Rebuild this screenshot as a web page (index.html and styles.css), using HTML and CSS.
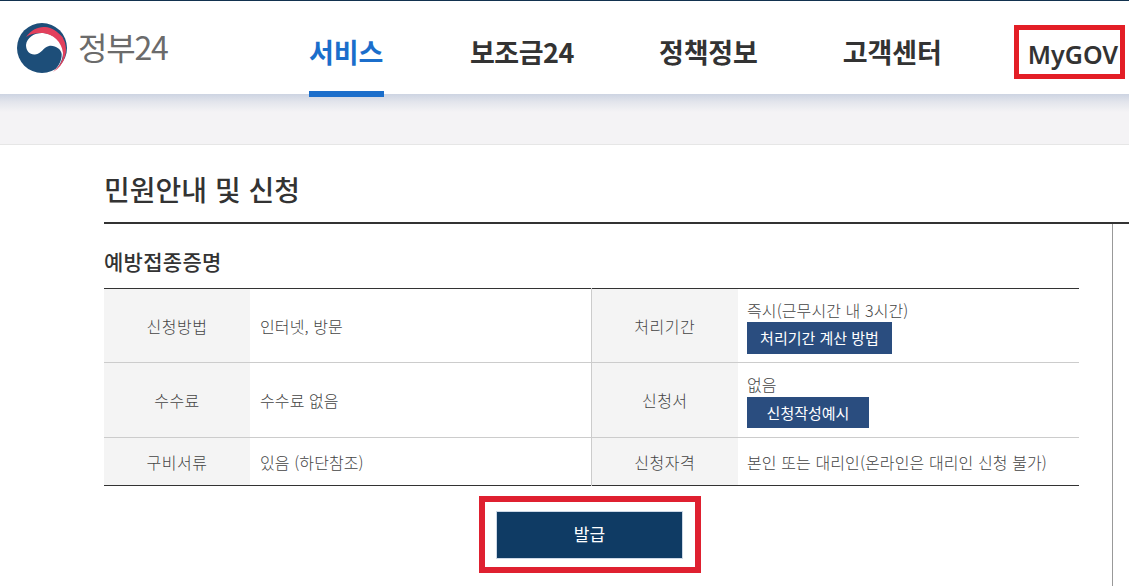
FILE: index.html
```html
<!DOCTYPE html>
<html lang="ko">
<head>
<meta charset="utf-8">
<title>민원안내 및 신청</title>
<link rel="stylesheet" href="styles.css">
</head>
<body>
<header class="site-header">
  <a class="logo" href="#">
    <svg class="logo-mark" width="52" height="52" viewBox="0 0 52 52" aria-hidden="true">
      <circle cx="25" cy="25" r="25" fill="#1d4e79"/>
      <path d="M9 22C10 14 18 9.500 26 10C38 11 47 20 46 30C45.500 38 42 44 36 49C41 44 45 38 44.700 31C44 26 38 22 32 23C26 24 25 31 18 31.500C13 32 9 28 9 22Z" fill="#fff"/>
      <path d="M9 14C14 7 21 3.500 28 4C35 4.500 41 9 45.500 14A25.500 25.500 0 0 1 36 49C43 43 46.500 37 46 30C45 19 36 11 26 10C19 9.700 13 11 9 14Z" fill="#e2405c"/>
    </svg>
    <span class="logo-text">정부24</span>
  </a>
  <nav class="main-nav">
    <a class="nav-item is-active" href="#">서비스</a>
    <a class="nav-item nav-subsidy" href="#">보조금24</a>
    <a class="nav-item" href="#">정책정보</a>
    <a class="nav-item" href="#">고객센터</a>
    <a class="nav-item nav-mygov" href="#">MyGOV</a>
  </nav>
</header>
<div class="sub-band"></div>
<main class="page">
  <h1 class="page-title">민원안내 및 신청</h1>
  <div class="content">
    <h2 class="service-title">예방접종증명</h2>
    <table class="info-table">
      <colgroup>
        <col class="col-head"><col class="col-body"><col class="col-head-wide"><col>
      </colgroup>
      <tbody>
        <tr class="row-a">
          <th>신청방법</th>
          <td>인터넷, 방문</td>
          <th class="th-split">처리기간</th>
          <td class="td-right td-stack">
            <div class="cell-line">즉시(근무시간 내 3시간)</div>
            <a class="mini-btn btn-calc" href="#">처리기간 계산 방법</a>
          </td>
        </tr>
        <tr class="row-b">
          <th>수수료</th>
          <td>수수료 없음</td>
          <th class="th-split">신청서</th>
          <td class="td-right td-stack">
            <div class="cell-line">없음</div>
            <a class="mini-btn btn-form" href="#">신청작성예시</a>
          </td>
        </tr>
        <tr class="row-c">
          <th>구비서류</th>
          <td>있음 (하단참조)</td>
          <th class="th-split">신청자격</th>
          <td class="td-right">본인 또는 대리인(온라인은 대리인 신청 불가)</td>
        </tr>
      </tbody>
    </table>
    <div class="action">
      <div class="action-mark">
        <a class="issue-btn" href="#">발급</a>
      </div>
    </div>
  </div>
</main>
</body>
</html>
```

FILE: styles.css
```css
* { box-sizing: border-box; }
html, body { margin: 0; padding: 0; height: 586px; overflow: hidden; background: #fff; }
body { font-family: "Noto Sans CJK KR", "Noto Sans", sans-serif; color: #333; }
a { text-decoration: none; color: inherit; }

.site-header {
  position: relative;
  height: 94px;
  border-top: 1px solid #12324f;
  display: flex;
  background: #fff;
}
.logo { width: 309px; padding: 22px 0 0 17px; display: flex; align-items: flex-start; flex: none; }
.logo-mark { flex: none; }
.logo-text {
  font-size: 32px; line-height: 46px; color: #6b6b6b; margin-left: 9px;
  letter-spacing: -1.2px; font-weight: 400;
}
.main-nav { display: flex; align-items: flex-start; gap: 85px; }
.nav-item {
  font-size: 27px; font-weight: 700; line-height: 36px; height: 93px; padding-top: 33px;
  color: #333; letter-spacing: -0.1px; white-space: nowrap;
}
.nav-item.is-active {
  color: #1b6ecb; border-bottom: 6px solid #1b6ecb; height: 96px; width: 75px; margin-right: 1px;
}
.nav-subsidy { letter-spacing: -0.5px; }
.nav-mygov {
  width: 111px; height: 54px; padding: 6px 0 0 9px; margin-top: 24px; margin-left: -13px;
  border: 5px solid #e31e26; font-size: 25px; line-height: 36px; letter-spacing: 0;
  font-family: "Noto Sans", sans-serif; font-weight: 600;
}

.sub-band {
  height: 51px;
  background: linear-gradient(#cdd4e2 0, #e3e5ec 8px, #f4f3f5 18px);
  border-bottom: 1px solid #e6e6e6;
}

.page-title {
  margin: 0 0 0 104px;
  height: 79px;
  padding-top: 24px;
  font-size: 28px; line-height: 40px; font-weight: 500;
  color: #333;
  border-bottom: 2px solid #333;
}
.content {
  width: 1113px; height: 362px;
  padding: 0 33px 0 104px;
  border-right: 1px solid #999;
}

.service-title {
  margin: 0; padding-top: 22px; height: 64px;
  font-size: 21px; line-height: 30px; font-weight: 500; letter-spacing: 0.3px;
  color: #333;
}

.info-table {
  width: 975px; border-collapse: collapse; table-layout: fixed;
  border-top: 1px solid #333; border-bottom: 1px solid #333;
  font-size: 16px; letter-spacing: 0.1px; color: #444; font-weight: 300;
}
.col-head { width: 146px; }
.col-body { width: 341px; }
.col-head-wide { width: 147px; }
.info-table th, .info-table td { padding: 0; line-height: 20px; }
.info-table th { background: #f4f4f4; font-weight: 300; text-align: center; letter-spacing: 0.5px; }
.info-table td { padding-left: 10px; }
.info-table .th-split { border-left: 1px solid #ccc; }
.info-table .td-right { padding-left: 9px; }
.info-table .td-stack { padding-top: 2px; }
.row-a { height: 74px; border-bottom: 1px solid #ccc; }
.row-b { height: 75px; border-bottom: 1px solid #ccc; }
.row-c { height: 48px; }
.cell-line { line-height: 20px; }
.mini-btn {
  display: block; margin-top: 2px; height: 32px; line-height: 31px; text-align: center;
  background: #2a4d7f; color: #fff; font-size: 15px; letter-spacing: 0; font-weight: 400;
}
.btn-calc { width: 145px; }
.btn-form { width: 122px; height: 31px; margin-top: 3px; }

.action { display: flex; justify-content: center; padding: 10px 3px 0 0; width: 975px; }
.action-mark {
  width: 222px; height: 77px;
  border: 6px solid #df2030;
  padding: 10px 13px 10px 12px;
}
.issue-btn {
  display: block; height: 46px; line-height: 44px; text-align: center;
  background: #0f3b64; color: #fff; font-size: 17px;
  box-shadow: 0 0 0 1px #cdd8e6;
}
```
